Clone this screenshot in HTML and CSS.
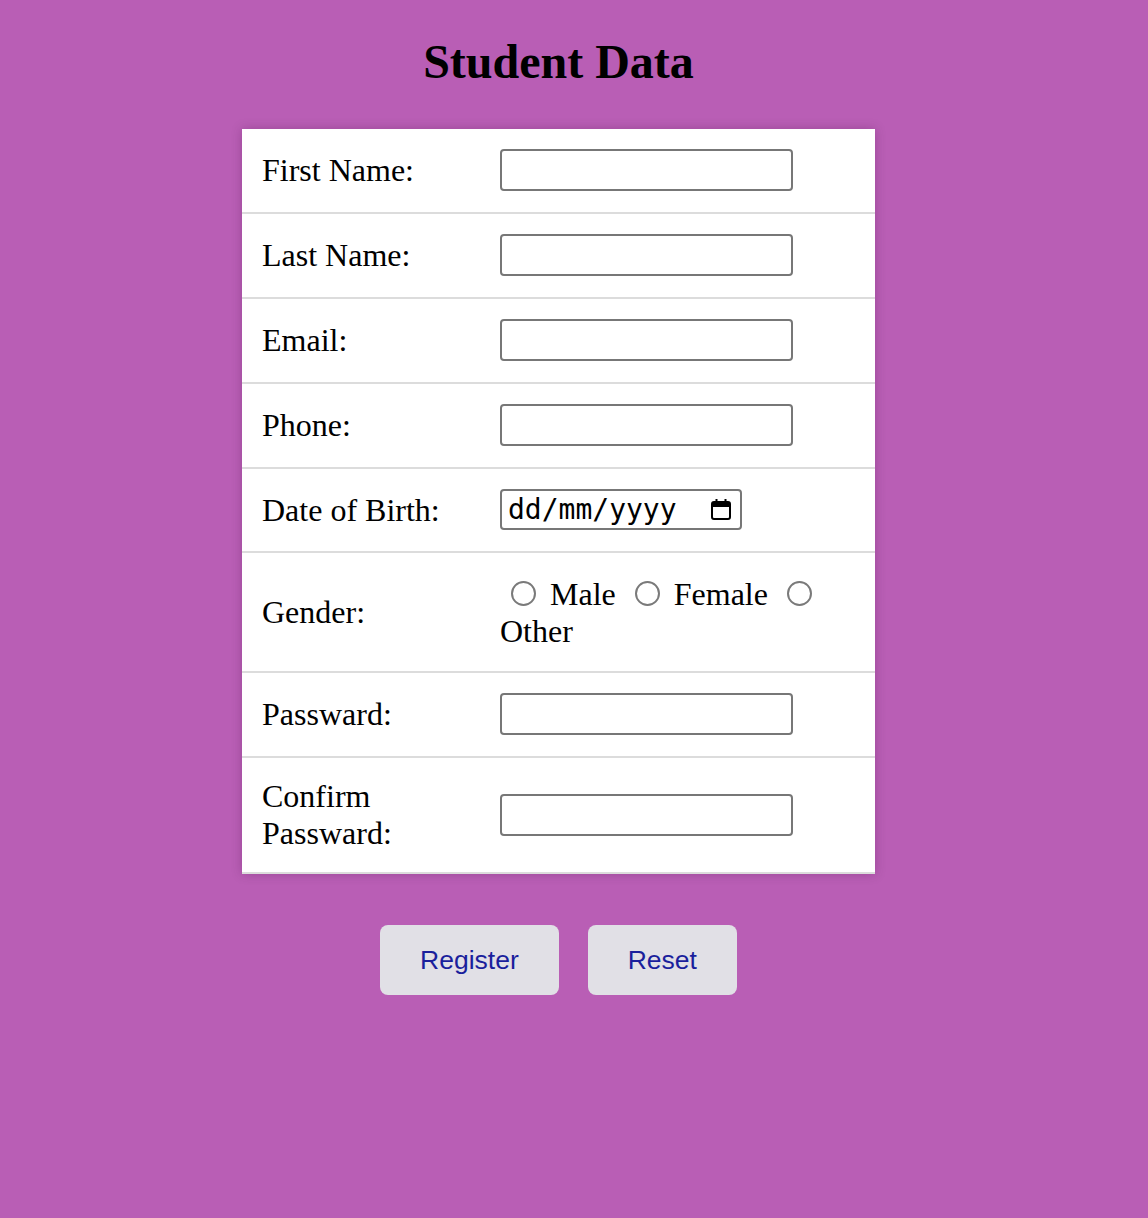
FILE: index.html
```html
<!DOCTYPE html>
<html lang="en">
<head>
<meta charset="utf-8">
<title>Student Data</title>
<link rel="stylesheet" href="styles.css">
</head>
<body>
<main class="page">
  <h1 class="title">Student Data</h1>
  <form class="form">
    <table class="card">
      <tr><td class="label">First Name:</td><td class="field"><input class="text-input" type="text"></td></tr>
      <tr><td class="label">Last Name:</td><td class="field"><input class="text-input" type="text"></td></tr>
      <tr><td class="label">Email:</td><td class="field"><input class="text-input" type="text"></td></tr>
      <tr><td class="label">Phone:</td><td class="field"><input class="text-input" type="text"></td></tr>
      <tr><td class="label">Date of Birth:</td><td class="field">
        <div class="date-input"><span class="date-text">dd/mm/yyyy</span>
          <svg class="cal" width="22" height="24" viewBox="0 0 22 24" aria-hidden="true">
            <rect x="2" y="4" width="18" height="17" rx="2" fill="none" stroke="#000" stroke-width="2"/>
            <rect x="2" y="4" width="18" height="5" fill="#000"/>
            <rect x="5.5" y="1" width="2" height="4" fill="#000"/>
            <rect x="14.5" y="1" width="2" height="4" fill="#000"/>
          </svg>
        </div>
      </td></tr>
      <tr><td class="label">Gender:</td><td class="field gender"><input class="radio" type="radio" name="g"> Male <input class="radio" type="radio" name="g"> Female <input class="radio" type="radio" name="g"> Other</td></tr>
      <tr><td class="label">Passward:</td><td class="field"><input class="text-input" type="password"></td></tr>
      <tr><td class="label">Confirm Passward:</td><td class="field"><input class="text-input" type="password"></td></tr>
    </table>
    <div class="actions">
      <button class="btn" type="button">Register</button>
      <button class="btn" type="button">Reset</button>
    </div>
  </form>
</main>
</body>
</html>
```

FILE: styles.css
```css
html, body {
  margin: 0;
  padding: 0;
  background: #b95eb5;
}
body {
  font-family: "Liberation Serif", "Times New Roman", serif;
  min-height: 1218px;
}
.page {
  width: 1117px;
  display: flex;
  flex-direction: column;
  align-items: center;
}
.title {
  margin: 35px 0 41px;
  font-size: 48px;
  font-weight: bold;
  line-height: 53px;
  color: #000;
}
.form {
  display: flex;
  flex-direction: column;
  align-items: center;
}
.card {
  width: 633px;
  background: #fff;
  border-collapse: collapse;
  box-shadow: 0 0 10px rgba(60, 0, 60, 0.25);
}
.card tr {
  border-bottom: 2px solid #dcdcdc;
}
.card td {
  font-size: 32px;
  line-height: 37px;
  vertical-align: middle;
  color: #000;
}
.label {
  width: 218px;
  padding: 20px 20px 20px 20px;
}
.field {
  padding: 20px 20px 21px 0;
}
.text-input {
  display: block;
  box-sizing: border-box;
  width: 293px;
  height: 42px;
  margin: 0;
  border: 2px solid #777;
  border-radius: 4px;
  background: #fff;
}
.date-input {
  box-sizing: border-box;
  width: 242px;
  height: 41px;
  border: 2px solid #777;
  border-radius: 4px;
  display: flex;
  align-items: center;
  justify-content: space-between;
  padding: 0 8px 0 6px;
}
.date-text {
  font-family: "DejaVu Sans Mono", "Liberation Mono", monospace;
  font-size: 28px;
  line-height: 34px;
  color: #000;
}
.cal {
  display: block;
}
.gender.field {
  padding-top: 23px;
  padding-bottom: 21px;
}
.radio {
  appearance: none;
  -webkit-appearance: none;
  box-sizing: border-box;
  width: 25px;
  height: 25px;
  margin: 0 6px 0 11px;
  border: 2px solid #7a7a7a;
  border-radius: 50%;
  background: #fff;
  vertical-align: -1px;
}
.actions {
  margin-top: 51px;
  display: flex;
  gap: 29px;
}
.btn {
  font-family: "Liberation Sans", Arial, sans-serif;
  font-size: 26.5px;
  line-height: 30px;
  padding: 20px 40px;
  border: none;
  border-radius: 8px;
  background: #e1e0e6;
  color: #1a1f9c;
}
```
